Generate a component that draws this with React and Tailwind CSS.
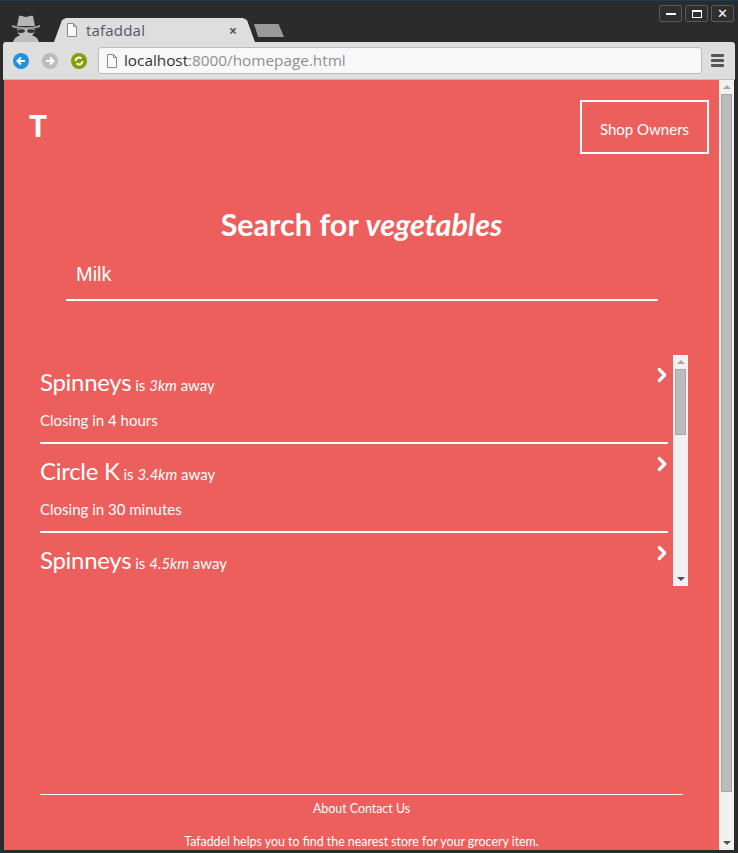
import React from "react";
import { ChevronRight } from "lucide-react";

const stores = [
    { name: "Spinneys", dist: "3km", note: "Closing in 4 hours" },
    { name: "Circle K", dist: "3.4km", note: "Closing in 30 minutes" },
    { name: "Spinneys", dist: "4.5km", note: "" },
];

// Page glyph used on the tab and in the address bar
const PageIcon = ({ className = "" }) => (
    <svg className={className} viewBox="0 0 12 14" fill="none">
        <path d="M1.5.5h6l3 3v10h-9z" fill="#fafafa" stroke="#8a8a8a" />
        <path d="M7.5.5v3h3" stroke="#8a8a8a" />
    </svg>
);

const NavButton = ({ color, dir = "left", spin = false }) => (
    <div className={`flex h-4 w-4 items-center justify-center rounded-full ${color}`}>
        <svg viewBox="0 0 12 12" className="h-3 w-3" fill="none" stroke="white" strokeWidth="2">
            {spin ? (
                <>
                    <path d="M2.5 6a3.5 3.5 0 0 1 6-2.4" />
                    <path d="M9.5 6a3.5 3.5 0 0 1-6 2.4" />
                </>
            ) : dir === "left" ? (
                <path d="M10 6H3M6 2.5 2.5 6 6 9.5" />
            ) : (
                <path d="M2 6h7M6 2.5 9.5 6 6 9.5" />
            )}
        </svg>
    </div>
);

const WinButton = ({ children }) => (
    <div className="flex h-[17px] w-[23px] items-center justify-center rounded-[2px] border border-[#5a5a5a] bg-[#2f2f2f]">
        {children}
    </div>
);

// Incognito figure at the left of the tab strip
const Spy = () => (
    <svg viewBox="0 0 34 28" className="h-7 w-[34px]">
        <path d="M8 12 10 2c3-1 5 1 7 1s4-2 7-1l2 10z" fill="#b5b5b5" />
        <path d="M3 11c8 3 20 3 28 0v2c-8 3-20 3-28 0z" fill="#a0a0a0" />
        <path d="M8 15h18c0 3-1 5-3 6l5 3 2 4H4l2-4 5-3c-2-1-3-3-3-6z" fill="#bdbdbd" />
        <path d="M8 16c3-1 6-1 8 0 0 2-1 3-4 3s-4-1-4-3zM18 16c2-1 5-1 8 0 0 2-1 3-4 3s-4-1-4-3z" fill="#333" />
    </svg>
);

const Scrollbar = ({ thumb, track }) => (
    <div className={`flex shrink-0 flex-col items-center bg-[#f1f1f1] ${track}`}>
        <div className="mt-[5px] h-0 w-0 border-x-[4px] border-b-[4px] border-x-transparent border-b-[#a8a8a8]" />
        <div className={`mt-[5px] w-[11px] border border-[#a5a5a5] bg-[#bcbcbc] ${thumb}`} />
        <div className="mt-auto mb-[5px] h-0 w-0 border-x-[4px] border-t-[4px] border-x-transparent border-t-[#505050]" />
    </div>
);

const StoreRow = ({ store, last }) => (
    <div className={`relative h-[89px] shrink-0 pt-[12px] ${last ? "" : "border-b-2 border-white"}`}>
        <div className="flex items-baseline leading-[30px]">
            <span className="text-[24px] tracking-[-0.3px]">{store.name}</span>
            <span className="ml-[4px] text-[15px]">
                is <em>{store.dist}</em> away
            </span>
        </div>
        <p className="mt-[8px] text-[15px] leading-[24px]">{store.note}</p>
        <ChevronRight className="absolute top-[9px] right-0 -mr-[5px] h-[22px] w-[22px]" strokeWidth={3.500} />
    </div>
);

export default function App() {
    return (
        <div className="flex h-[853px] w-[738px] flex-col overflow-hidden border-t border-[#1d3a5c] bg-[#2b2b2b] font-['Lato',sans-serif]">
            {/* Window title strip */}
            <div className="relative flex h-[41px] shrink-0 items-end pl-[9px]">
                <Spy />
                <div className="relative ml-[11px] flex h-[24px] w-[201px] items-center pr-[18px] pl-[10px] [clip-path:polygon(0_100%,4%_8%,6%_0,94%_0,96%_8%,100%_100%)] bg-[#dedede] font-['Open_Sans',sans-serif] text-[15px] text-[#4f5b66]">
                    <PageIcon className="ml-[2px] h-[14px] w-[12px]" />
                    <span className="ml-[8px] tracking-[0.2px]">tafaddal</span>
                    <span className="ml-auto text-[14px] font-bold text-[#555]">×</span>
                </div>
                <div className="mb-[5px] -ml-[1px] h-[13px] w-[30px] bg-[#9a9a9a] [clip-path:polygon(0_0,82%_0,100%_100%,14%_100%)]" />
                <div className="absolute top-[4px] right-[4px] flex gap-[3px]">
                    <WinButton><div className="h-[2px] w-[10px] bg-white" /></WinButton>
                    <WinButton><div className="h-[8px] w-[10px] border border-t-2 border-white" /></WinButton>
                    <WinButton><span className="text-[13px] leading-none text-white">✕</span></WinButton>
                </div>
            </div>

            {/* Browser toolbar */}
            <div className="mx-[3px] flex h-[38px] shrink-0 items-center rounded-t-[3px] border-b border-[#bdbdbd] bg-[#dedede] pl-[10px]">
                <div className="flex items-center gap-[13px]">
                    <NavButton color="bg-[#2290dc]" />
                    <NavButton color="bg-[#b9bcbf]" dir="right" />
                    <NavButton color="bg-[#7f9f00]" spin />
                </div>
                <div className="ml-[11px] flex h-[27px] w-[604px] items-center rounded-[3px] border border-[#bdbdbd] bg-[#f8f8f8] pl-[7px] font-['Open_Sans',sans-serif] text-[15.300px]">
                    <PageIcon className="h-[14px] w-[12px]" />
                    <span className="ml-[6px] text-[#2c3440]">localhost</span>
                    <span className="text-[#8b8f96]">:8000/homepage.html</span>
                </div>
                <div className="ml-[9px] flex flex-col gap-[2px]">
                    <div className="h-[3px] w-[13px] rounded-[1px] bg-[#555]" />
                    <div className="h-[3px] w-[13px] rounded-[1px] bg-[#555]" />
                    <div className="h-[3px] w-[13px] rounded-[1px] bg-[#555]" />
                </div>
            </div>

            {/* Page viewport */}
            <div className="mx-[4px] flex h-[770px] shrink-0 bg-[#ec5f5c] text-white">
                <div className="flex min-w-0 flex-1 flex-col">
                    <header className="flex h-[74px] items-start justify-between pt-[20px] pr-[10px] pl-[25px]">
                        <span className="mt-[9px] text-[30px] leading-[32px] font-black">T</span>
                        <a className="flex h-[54px] w-[129px] items-center justify-center border-2 border-white pt-[4px] text-[15px]">
                            Shop Owners
                        </a>
                    </header>

                    <h1 className="mt-[52px] text-center text-[30.500px] leading-[36px] font-bold">
                        Search for <em>vegetables</em>
                    </h1>

                    <div className="mt-[14px] mr-[61px] ml-[62px] flex h-[45px] items-center border-b-2 border-white pb-[8px] pl-[10px] font-['Liberation_Sans',sans-serif] text-[20px]">
                        Milk
                    </div>

                    <div className="mt-[54px] ml-[36px] flex h-[231px] w-[648px] overflow-hidden">
                        <div className="flex w-[628px] flex-col">
                            {stores.map((store, i) => (
                                <StoreRow key={i} store={store} last={i === stores.length - 1} />
                            ))}
                        </div>
                        <Scrollbar track="ml-[5px] w-[15px]" thumb="h-[66px]" />
                    </div>

                    <footer className="mx-[36px] mt-auto mb-[3px] border-t border-white text-center text-[12.400px] leading-[18px]">
                        <p className="mt-[5px]">About Contact Us</p>
                        <p className="mt-[15px] h-[14px]">Tafaddel helps you to find the nearest store for your grocery item.</p>
                    </footer>
                </div>
                <Scrollbar track="w-[15px]" thumb="h-[698px]" />
            </div>
        </div>
    );
}
